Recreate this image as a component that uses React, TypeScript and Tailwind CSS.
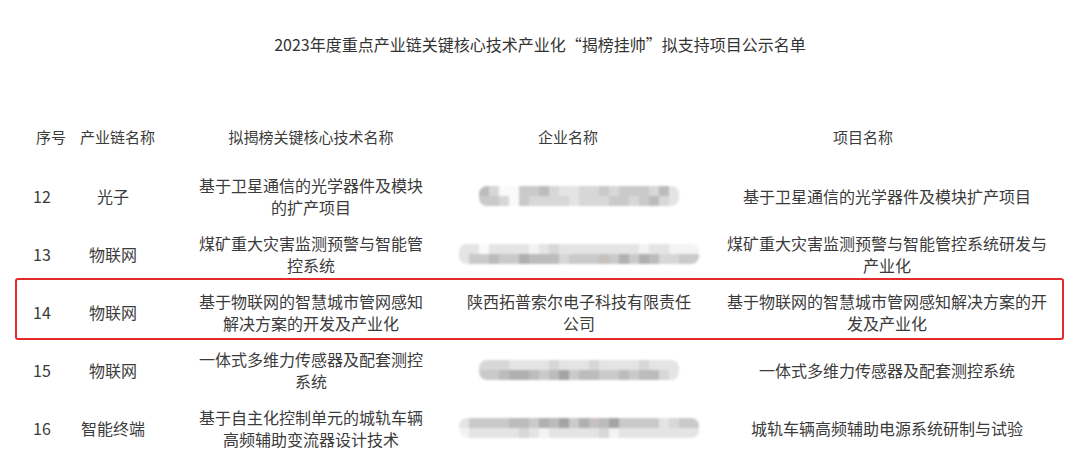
const shades = [
  "bg-[#f3f3f3]",
  "bg-[#e4e4e4]",
  "bg-[#d7d7d7]",
  "bg-[#cacaca]",
  "bg-[#bcbcbc]",
  "bg-[#b0b0b0]",
  "bg-[#a4a4a4]",
  "bg-[#c6c0be]",
  "bg-[#b7bcc1]",
  "bg-[#fafafa]",
];

interface Row {
  no: string;
  chain: string;
  tech: string;
  company?: string;
  mosaic?: [string, string];
  project: string;
  marked?: boolean;
}

const rows: Row[] = [
  {
    no: "12",
    chain: "光子",
    tech: "基于卫星通信的光学器件及模块的扩产项目",
    mosaic: ["42993342112232333241", "33293222212223323421"],
    project: "基于卫星通信的光学器件及模块扩产项目",
  },
  {
    no: "13",
    chain: "物联网",
    tech: "煤矿重大灾害监测预警与智能管控系统",
    mosaic: ["119111101211111111011000", "133433544423337353542233"],
    project: "煤矿重大灾害监测预警与智能管控系统研发与产业化",
  },
  {
    no: "14",
    chain: "物联网",
    tech: "基于物联网的智慧城市管网感知解决方案的开发及产业化",
    company: "陕西拓普索尔电子科技有限责任公司",
    project: "基于物联网的智慧城市管网感知解决方案的开发及产业化",
    marked: true,
  },
  {
    no: "15",
    chain: "物联网",
    tech: "一体式多维力传感器及配套测控系统",
    mosaic: ["22211112111211112111", "33455434634433434421"],
    project: "一体式多维力传感器及配套测控系统",
  },
  {
    no: "16",
    chain: "智能终端",
    tech: "基于自主化控制单元的城轨车辆高频辅助变流器设计技术",
    mosaic: ["133334435463574633331233", "011111210111112011111111"],
    project: "城轨车辆高频辅助电源系统研制与试验",
  },
];

function Mosaic({ cells }: { cells: [string, string] }) {
  return (
    <div className="flex flex-col shrink-0 rounded-[8px] overflow-hidden blur-[1.2px]">
      {cells.map((line, i) => (
        <div key={i} className="flex">
          {line.split("").map((c, j) => (
            <div key={j} className={`w-[10px] h-[10px] ${shades[Number(c)]}`} />
          ))}
        </div>
      ))}
    </div>
  );
}

export default function App() {
  return (
    <div className="w-[1080px] h-[457px] bg-white overflow-hidden font-['Noto_Sans_CJK_SC',sans-serif] text-[#3b3b3b]">
      <h1 className="pt-[33px] text-center text-[16px] leading-[22px] text-[#333]">
        2023年度重点产业链关键核心技术产业化“揭榜挂帅”拟支持项目公示名单
      </h1>

      <div className="mx-[15px] mt-[52px] w-[1049px]">
        <div className="grid grid-cols-[57px_82px_314px_222px_374px] h-[60px] items-center text-[15px] leading-[22px]">
          <div className="pl-[21px]">序号</div>
          <div className="pl-[8px] text-center whitespace-nowrap">产业链名称</div>
          <div className="text-center">拟揭榜关键核心技术名称</div>
          <div className="pr-[22px] text-center">企业名称</div>
          <div className="pr-[28px] text-center">项目名称</div>
        </div>

        {rows.map((r) => (
          <div
            key={r.no}
            className="relative grid grid-cols-[57px_82px_314px_222px_374px] h-[58px] items-center text-[16px] leading-[22px]"
          >
            {r.marked && (
              <div className="absolute inset-x-0 -top-[5px] bottom-[1px] border-2 border-[#e42a2a] rounded-[3px]" />
            )}
            <div className="pl-[18px]">{r.no}</div>
            <div className="text-center whitespace-nowrap">{r.chain}</div>
            <div className="flex justify-center">
              <div className="w-[230px] shrink-0 text-center">{r.tech}</div>
            </div>
            <div className="flex justify-center">
              {r.company ? (
                <div className="w-[232px] shrink-0 text-center">{r.company}</div>
              ) : (
                r.mosaic && <Mosaic cells={r.mosaic} />
              )}
            </div>
            <div className="flex justify-center pl-[20px]">
              <div className="w-[326px] shrink-0 text-center">{r.project}</div>
            </div>
          </div>
        ))}
      </div>
    </div>
  );
}
